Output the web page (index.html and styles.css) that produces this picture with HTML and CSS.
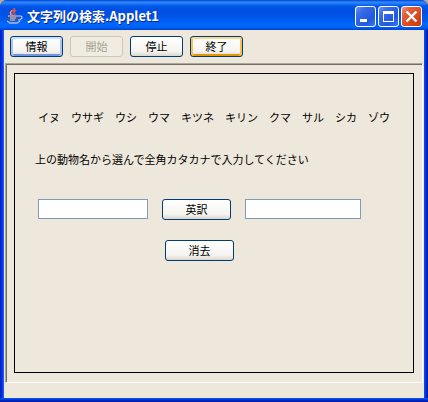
FILE: index.html
```html
<!DOCTYPE html>
<html lang="ja">
<head>
<meta charset="utf-8">
<meta name="viewport" content="width=device-width, initial-scale=1">
<title>文字列の検索.Applet1</title>
<link rel="stylesheet" href="styles.css">
</head>
<body>
<main class="window">
  <header class="titlebar">
    <svg class="app-icon" viewBox="0 0 16 16" aria-hidden="true">
      <path d="M7 0v2L4 4v1l2 3M9 2L7 4v1l1 2" fill="none" stroke="#e8583c" stroke-width="1.5"/>
      <path d="M5 2l-2 3 1 2" fill="none" stroke="#ffb09a" stroke-width="1"/>
      <path d="M1 8h10v3l-2 2H3l-2-2z" fill="#4d5080"/>
      <path d="M1 8h10M3 10h6M3 12h5" stroke="#d4d9ee" stroke-width="1"/>
      <path d="M11 8h3l1 1v1l-2 2h-2" fill="none" stroke="#c3c9e2" stroke-width="1.2"/>
      <path d="M0 13l3 2h7l3-2" fill="none" stroke="#b4bbdc" stroke-width="1.4"/>
    </svg>
    <h1 class="title">文字列の検索.Applet1</h1>
    <div class="controls">
      <button class="control" type="button" aria-label="最小化">
        <svg viewBox="0 0 21 21" aria-hidden="true"><path d="M5 13h7v3H5z" fill="#fff"/></svg>
      </button>
      <button class="control" type="button" aria-label="最大化">
        <svg viewBox="0 0 21 21" aria-hidden="true"><path d="M5 5h11v11H5zM6 8v7h9V8z" fill="#fff" fill-rule="evenodd"/></svg>
      </button>
      <button class="control close" type="button" aria-label="閉じる">
        <svg viewBox="0 0 21 21" aria-hidden="true"><path d="M5.500 5.500l10 10M15.500 5.500l-10 10" stroke="#fff" stroke-width="2.400"/></svg>
      </button>
    </div>
  </header>
  <div class="client">
    <nav class="toolbar">
      <button class="button default" type="button">情報</button>
      <button class="button" type="button" disabled>開始</button>
      <button class="button" type="button">停止</button>
      <button class="button hot" type="button">終了</button>
    </nav>
    <section class="stage">
      <form class="applet">
        <p class="animals">イヌ　ウサギ　ウシ　ウマ　キツネ　キリン　クマ　サル　シカ　ゾウ</p>
        <label class="prompt" for="animal">上の動物名から選んで全角カタカナで入力してください</label>
        <div class="row">
          <input class="field" id="animal" type="text">
          <button class="button wide" type="button">英訳</button>
          <input class="field result" type="text" aria-label="英訳" readonly>
        </div>
        <button class="button wide clear" type="reset">消去</button>
      </form>
    </section>
    <footer class="status"></footer>
  </div>
</main>
</body>
</html>
```

FILE: styles.css
```css
* {
  box-sizing: border-box;
}

body {
  margin: 0;
  background: #b9ab92;
  color: #000;
  font: 11px/16px "Noto Sans CJK JP", sans-serif;
}

.window {
  display: flex;
  flex-direction: column;
  min-height: 100vh;
  padding: 0 4px 4px;
  border-radius: 7px 7px 0 0;
  background:
    linear-gradient(#0a5cf0, #0040e0 30%, #0010a0) bottom / 100% 4px no-repeat,
    linear-gradient(90deg, #0018c8, #0030e0 50%, #1070f4) left / 4px 100% no-repeat,
    linear-gradient(90deg, #0058f0, #0030d8 50%, #001098) right / 4px 100% no-repeat,
    #0050e8;
}

.titlebar {
  display: flex;
  align-items: center;
  height: 30px;
  margin: 0 -4px;
  padding: 2px 6px 0 7px;
  border-radius: 7px 7px 0 0;
  background: linear-gradient(#0040cc, #2c88ff 2px, #2c80fa 3px, #0058ea 6px, #0050e2 9px, #0054e6 16px, #0066fc 24px, #0064fa 27px, #0044d0);
}

.app-icon {
  width: 16px;
  height: 16px;
}

.title {
  flex: 1;
  margin: 0 0 0 4px;
  color: #fff;
  font-size: 13px;
  font-weight: bold;
  line-height: 20px;
  white-space: nowrap;
  text-shadow: 1px 1px 0 #0a2a90;
}

.controls {
  display: flex;
  gap: 2px;
}

.control {
  width: 21px;
  height: 21px;
  padding: 0;
  border: 1px solid #fff;
  border-radius: 3px;
  background: linear-gradient(135deg, #6c98f4, #3a6ce8 25%, #2258dc 70%, #3c78f4);
}

.control svg {
  display: block;
  width: 21px;
  height: 21px;
  margin: -1px;
}

.close {
  background: linear-gradient(135deg, #f09a80, #e4603c 25%, #d84418 70%, #c83c10);
}

.client {
  flex: 1;
  display: flex;
  flex-direction: column;
  background: #eee8dc;
}

.toolbar {
  display: flex;
  gap: 7px;
  padding: 6px;
}

.button {
  width: 53px;
  height: 21px;
  padding: 0;
  border: 1px solid #003c74;
  border-radius: 3px;
  background: linear-gradient(#fff, #f5f4f0 75%, #dcd6cc);
  color: #000;
  font: inherit;
  line-height: 19px;
}

.default {
  box-shadow: inset 0 2px 0 #cee0ff, inset 2px 0 0 #a8c4f4, inset -2px 0 0 #a8c4f4, inset 0 -2px 0 #7096e4;
}

.hot {
  box-shadow: inset 0 2px 0 #fdd889, inset 2px 0 0 #fac050, inset -2px 0 0 #fac050, inset 0 -2px 0 #e59700;
}

.button:disabled {
  border-color: #cbc8b9;
  background: #f0ece2;
  color: #a5a392;
}

.wide {
  width: 69px;
}

.stage {
  flex: 1;
  display: flex;
  margin: 0 1px;
  padding: 9px 8px;
  border: 1px solid;
  border-color: #aca899 #fff #fff #aca899;
  box-shadow: inset 1px 1px 0 #716f64;
}

.applet {
  flex: 1;
  padding: 35px 20px 20px;
  border: 1px solid #000;
}

.animals {
  margin: 0 0 26px 3px;
  white-space: nowrap;
}

.prompt {
  display: block;
  white-space: nowrap;
}

.row {
  display: flex;
  gap: 14px;
  margin: 32px 0 20px 3px;
}

.field {
  width: 110px;
  height: 20px;
  padding: 0 3px;
  border: 1px solid #7f9db9;
  background: #fff;
  font: inherit;
}

.result {
  width: 116px;
}

.clear {
  display: block;
  margin-left: 130px;
}

.status {
  height: 15px;
}
```
